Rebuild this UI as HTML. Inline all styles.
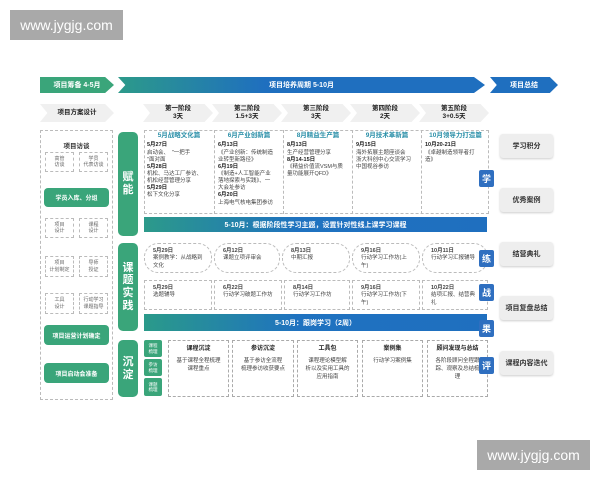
<!DOCTYPE html>
<html><head><meta charset="utf-8"><style>
*{margin:0;padding:0;box-sizing:border-box}
body{width:600px;height:480px;background:#fff;position:relative;overflow:hidden;font-family:"Liberation Sans","Noto Sans CJK SC",sans-serif;color:#333}
.a{position:absolute}
.c{display:flex;align-items:center;justify-content:center;text-align:center}
.wm{background:#a9a9a9;color:#fff;font-size:14px;}
.dash{border:1px dashed #bbb}
.g{background:#3aa57a;color:#fff;border-radius:4px;font-weight:bold}
.vb{background:#3aa57a;color:#fff;border-radius:5px;font-size:11px;font-weight:bold;line-height:1.15;flex-direction:column}
.chev{background:#f0f0f0;clip-path:polygon(0 0,88% 0,100% 50%,88% 100%,0 100%,10% 50%);font-size:6.5px;font-weight:bold;line-height:1.2;color:#222}
.sq{background:#2f6fc0;color:#fff;font-size:9px;font-weight:bold;border-radius:2px;width:15px;height:17px}
.gray{background:#eeeeee;border-radius:3px;font-size:7px;color:#333;font-weight:bold;box-shadow:0 1px 2px #ccc}
.card{border:1px dashed #bbb;font-size:5.5px;line-height:1.3;padding:2px 3px;color:#444}
.card h4{color:#2a8fa8;font-size:6.5px;text-align:center;margin-bottom:2px}
.card b{color:#222}
.sb{border:1px dashed #bbb;font-size:5px;color:#666;line-height:1.3}
.pill{border:1px dashed #bbb;border-radius:14px;font-size:5.5px;line-height:1.35;padding:4px 8px;color:#444}
.rect{border:1px dashed #bbb;font-size:5.5px;line-height:1.35;padding:4px 8px;color:#444}
.sg{background:#3aa57a;color:#fff;font-size:4.5px;border-radius:2px;line-height:1.2}
.ck{border:1px dashed #aaa;font-size:5.5px;text-align:center;padding:4px 3px;line-height:1.4;color:#444}
.ck h5{font-size:6px;color:#222;margin-bottom:5px}
</style></head><body>

<div class="a wm c" style="left:10px;top:10px;width:113px;height:30px">www.jygjg.com</div>
<div class="a wm c" style="left:477px;top:440px;width:113px;height:30px">www.jygjg.com</div>

<div class="a c" style="left:40px;top:77px;width:74px;height:16px;background:#3aa57a;color:#fff;font-size:7px;font-weight:bold;clip-path:polygon(0 0,88% 0,100% 50%,88% 100%,0 100%)">项目筹备 4-5月</div>
<div class="a c" style="left:118px;top:77px;width:367px;height:16px;background:linear-gradient(90deg,#2c9a8a,#1f6fbf 40%,#1f6fbf);color:#fff;font-size:7px;font-weight:bold;clip-path:polygon(0 0,97% 0,100% 50%,97% 100%,0 100%,2% 50%)">项目培养周期 5-10月</div>
<div class="a c" style="left:490px;top:77px;width:68px;height:16px;background:#1f6fbf;color:#fff;font-size:7px;font-weight:bold;clip-path:polygon(0 0,88% 0,100% 50%,88% 100%,0 100%,10% 50%)">项目总结</div>

<div class="a c chev" style="left:40px;top:104px;width:74px;height:18px">项目方案设计</div>
<div class="a c chev" style="left:143px;top:104px;width:70px;height:18px">第一阶段<br>3天</div>
<div class="a c chev" style="left:212px;top:104px;width:70px;height:18px">第二阶段<br>1.5+3天</div>
<div class="a c chev" style="left:281px;top:104px;width:70px;height:18px">第三阶段<br>3天</div>
<div class="a c chev" style="left:350px;top:104px;width:70px;height:18px">第四阶段<br>2天</div>
<div class="a c chev" style="left:419px;top:104px;width:70px;height:18px">第五阶段<br>3+0.5天</div>

<div class="a dash" style="left:40px;top:130px;width:73px;height:270px"></div>
<div class="a c" style="left:40px;top:140px;width:73px;height:10px;font-size:6.5px;font-weight:bold">项目访谈</div>
<div class="a c sb" style="left:45px;top:152px;width:29px;height:20px">高管<br>访谈</div>
<div class="a c sb" style="left:79px;top:152px;width:29px;height:20px">学员<br>代表访谈</div>
<div class="a c g" style="left:44px;top:188px;width:65px;height:19px;font-size:6px">学员入库、分组</div>
<div class="a c sb" style="left:45px;top:218px;width:29px;height:20px">项目<br>设计</div>
<div class="a c sb" style="left:79px;top:218px;width:29px;height:20px">课程<br>设计</div>
<div class="a c sb" style="left:45px;top:256px;width:29px;height:21px">项目<br>计划制定</div>
<div class="a c sb" style="left:79px;top:256px;width:29px;height:21px">导师<br>授证</div>
<div class="a c sb" style="left:45px;top:293px;width:29px;height:21px">工具<br>设计</div>
<div class="a c sb" style="left:79px;top:293px;width:29px;height:21px">行动学习<br>课题指导</div>
<div class="a c g" style="left:44px;top:325px;width:65px;height:20px;font-size:6px">项目运营计划确定</div>
<div class="a c g" style="left:44px;top:363px;width:65px;height:20px;font-size:6px">项目启动会准备</div>

<div class="a c vb" style="left:118px;top:132px;width:20px;height:104px">赋<br>能</div>
<div class="a c vb" style="left:118px;top:243px;width:20px;height:88px">课<br>题<br>实<br>践</div>
<div class="a c vb" style="left:118px;top:340px;width:20px;height:57px">沉<br>淀</div>

<div class="a dash" style="left:144px;top:130px;width:345px;height:84px"></div>
<div class="a card" style="left:144px;top:130px;width:70px;height:84px;border:none"><h4>5月战略文化篇</h4><b>5月27日</b><br>启动会、　"一把手<br>"面对面<br><b>5月28日</b><br>机松、马达工厂参访、<br>机松经营管理分享<br><b>5月29日</b><br>松下文化分享</div>
<div class="a card" style="left:214px;top:130px;width:69px;height:84px;border-top:none;border-bottom:none;border-right:none"><h4>6月产业创新篇</h4><b>6月13日</b><br>《产业创新：传统制造<br>业转型新路径》<br><b>6月19日</b><br>《制造+人工智能产业<br>落地探索与实践》、一<br>大会址参访<br><b>6月20日</b><br>上海电气核电集团参访</div>
<div class="a card" style="left:283px;top:130px;width:69px;height:84px;border-top:none;border-bottom:none;border-right:none"><h4>8月精益生产篇</h4><b>8月13日</b><br>生产经营管理分享<br><b>8月14-15日</b><br>《精益价值流VSM与质<br>量功能展开QFD》</div>
<div class="a card" style="left:352px;top:130px;width:69px;height:84px;border-top:none;border-bottom:none;border-right:none"><h4>9月技术革新篇</h4><b>9月15日</b><br>海外拓展主题座谈会<br>浙大科创中心交流学习<br>中国视谷参访</div>
<div class="a card" style="left:421px;top:130px;width:68px;height:84px;border-top:none;border-bottom:none;border-right:none"><h4>10月领导力打造篇</h4><b>10月20-21日</b><br>《卓越制造领导者打<br>造》</div>

<div class="a c" style="left:144px;top:217px;width:343px;height:15px;background:linear-gradient(90deg,#2c9a8a,#1f72c0 45%,#1f6fbf);color:#fff;font-size:7px;font-weight:bold">5-10月：根据阶段性学习主题，设置针对性线上课学习课程</div>

<div class="a pill" style="left:144px;top:243px;width:68px;height:30px"><b>5月29日</b><br>案例教学：从战略到<br>文化</div>
<div class="a pill" style="left:214px;top:243px;width:66px;height:30px"><b>6月12日</b><br>课题立项评审会</div>
<div class="a pill" style="left:282px;top:243px;width:68px;height:30px"><b>8月13日</b><br>中期汇报</div>
<div class="a pill" style="left:352px;top:243px;width:68px;height:30px"><b>9月16日</b><br>行动学习工作坊(上午)</div>
<div class="a pill" style="left:422px;top:243px;width:66px;height:30px"><b>10月11日</b><br>行动学习汇报辅导</div>
<div class="a rect" style="left:144px;top:280px;width:68px;height:30px"><b>5月29日</b><br>选题辅导</div>
<div class="a rect" style="left:214px;top:280px;width:68px;height:30px"><b>6月22日</b><br>行动学习破题工作坊</div>
<div class="a rect" style="left:284px;top:280px;width:66px;height:30px"><b>8月14日</b><br>行动学习工作坊</div>
<div class="a rect" style="left:352px;top:280px;width:68px;height:30px"><b>9月16日</b><br>行动学习工作坊(下午)</div>
<div class="a rect" style="left:422px;top:280px;width:66px;height:30px"><b>10月22日</b><br>结项汇报、结营典礼</div>

<div class="a c" style="left:144px;top:314px;width:343px;height:17px;background:linear-gradient(90deg,#2a9a8a,#1f72c0 45%,#1f6fbf);color:#fff;font-size:7px;font-weight:bold">5-10月：跟岗学习（2周）</div>

<div class="a c sg" style="left:144px;top:340px;width:18px;height:17px">课程<br>梳理</div>
<div class="a c sg" style="left:144px;top:359px;width:18px;height:17px">参访<br>梳理</div>
<div class="a c sg" style="left:144px;top:378px;width:18px;height:18px">课题<br>梳理</div>
<div class="a ck" style="left:168px;top:340px;width:61px;height:57px"><h5>课程沉淀</h5>基于课程全程梳理<br>课程重点</div>
<div class="a ck" style="left:232px;top:340px;width:62px;height:57px"><h5>参访沉淀</h5>基于参访全流程<br>梳理参访收获要点</div>
<div class="a ck" style="left:297px;top:340px;width:61px;height:57px"><h5>工具包</h5>课程理论模型解<br>析以及实用工具的<br>应用指南</div>
<div class="a ck" style="left:362px;top:340px;width:61px;height:57px"><h5>案例集</h5>行动学习案例集</div>
<div class="a ck" style="left:427px;top:340px;width:61px;height:57px"><h5>顾问发现与总结</h5>各阶段顾问全程跟<br>踪、观察及总结梳<br>理</div>

<div class="a c sq" style="left:479px;top:170px">学</div>
<div class="a c sq" style="left:479px;top:250px">练</div>
<div class="a c sq" style="left:479px;top:284px">战</div>
<div class="a c sq" style="left:479px;top:320px">果</div>
<div class="a c sq" style="left:479px;top:357px">评</div>

<div class="a c gray" style="left:500px;top:134px;width:53px;height:24px">学习积分</div>
<div class="a c gray" style="left:500px;top:188px;width:53px;height:24px">优秀案例</div>
<div class="a c gray" style="left:500px;top:242px;width:53px;height:24px">结营典礼</div>
<div class="a c gray" style="left:500px;top:296px;width:53px;height:24px">项目复盘总结</div>
<div class="a c gray" style="left:500px;top:351px;width:53px;height:24px">课程内容迭代</div>

</body></html>
